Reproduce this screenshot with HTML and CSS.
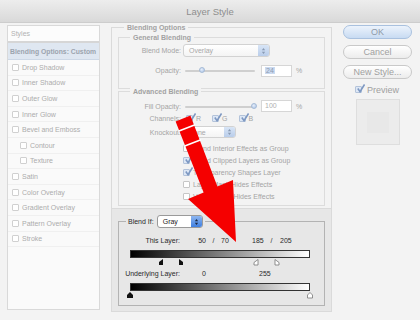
FILE: index.html
```html
<!DOCTYPE html>
<html lang="en">
<head>
    <meta charset="UTF-8">
    <title>Layer Style</title>
    <link rel="stylesheet" href="styles.css">
</head>
<body>
    <div class="titlebar">Layer Style</div>
    <div class="dialog">
        <div class="styles-list">
            <div class="list-head">Styles</div>
            <div class="list-item active">Blending Options: Custom</div>
            <div class="list-item"><span class="box"></span>Drop Shadow</div>
            <div class="list-item"><span class="box"></span>Inner Shadow</div>
            <div class="list-item"><span class="box"></span>Outer Glow</div>
            <div class="list-item"><span class="box"></span>Inner Glow</div>
            <div class="list-item"><span class="box"></span>Bevel and Emboss</div>
            <div class="list-item sub"><span class="box"></span>Contour</div>
            <div class="list-item sub"><span class="box"></span>Texture</div>
            <div class="list-item"><span class="box"></span>Satin</div>
            <div class="list-item"><span class="box"></span>Color Overlay</div>
            <div class="list-item"><span class="box"></span>Gradient Overlay</div>
            <div class="list-item"><span class="box"></span>Pattern Overlay</div>
            <div class="list-item"><span class="box"></span>Stroke</div>
        </div>

        <div class="options">
            <div class="legend">Blending Options</div>
            <div class="options-top">
                <div class="group general">
                    <div class="legend">General Blending</div>
                    <div class="row first">
                        <span class="label">Blend Mode:</span>
                        <div class="select mode">Overlay<span class="stepper"><svg viewBox="0 0 6 9"><path d="M1 3.5 L3 1 L5 3.5 Z M1 5.5 L3 8 L5 5.5 Z"/></svg></span></div>
                    </div>
                    <div class="row second">
                        <span class="label">Opacity:</span>
                        <div class="slider"><span class="thumb" style="left: 14px"></span></div>
                        <div class="num"><span class="hl">24</span></div>
                        <span class="pct">%</span>
                    </div>
                </div>

                <div class="group advanced">
                    <div class="legend">Advanced Blending</div>
                    <div class="row fill">
                        <span class="label">Fill Opacity:</span>
                        <div class="slider"><span class="thumb" style="left: 66px"></span></div>
                        <div class="num">100</div>
                        <span class="pct">%</span>
                    </div>
                    <div class="row">
                        <span class="label">Channels:</span>
                        <span class="cb on chan"><svg viewBox="0 0 10 10"><path d="M2 5 L4.5 8.5 L9.5 0.5"/></svg></span>R
                        <span class="cb on chan"><svg viewBox="0 0 10 10"><path d="M2 5 L4.5 8.5 L9.5 0.5"/></svg></span>G
                        <span class="cb on chan"><svg viewBox="0 0 10 10"><path d="M2 5 L4.5 8.5 L9.5 0.5"/></svg></span>B
                    </div>
                    <div class="row knock">
                        <span class="label">Knockout:</span>
                        <div class="select ko">None<span class="stepper"><svg viewBox="0 0 6 9"><path d="M1 3.5 L3 1 L5 3.5 Z M1 5.5 L3 8 L5 5.5 Z"/></svg></span></div>
                    </div>
                    <div class="checks">
                        <div class="check-row"><span class="cb"></span>Blend Interior Effects as Group</div>
                        <div class="check-row"><span class="cb on"><svg viewBox="0 0 10 10"><path d="M2 5 L4.5 8.5 L9.5 0.5"/></svg></span>Blend Clipped Layers as Group</div>
                        <div class="check-row"><span class="cb on"><svg viewBox="0 0 10 10"><path d="M2 5 L4.5 8.5 L9.5 0.5"/></svg></span>Transparency Shapes Layer</div>
                        <div class="check-row"><span class="cb"></span>Layer Mask Hides Effects</div>
                        <div class="check-row"><span class="cb"></span>Vector Mask Hides Effects</div>
                    </div>
                </div>
            </div>

            <div class="blend-if">
                <div class="bi-field">
                    <div class="bi-legend">
                        Blend If:
                        <div class="select gray">Gray<span class="stepper"><svg viewBox="0 0 6 9"><path d="M1 3.5 L3 1 L5 3.5 Z M1 5.5 L3 8 L5 5.5 Z"/></svg></span></div>
                    </div>
                    <div class="bi-row this">
                        <span class="bi-label">This Layer:</span>
                        <span class="v1">50</span><span class="slash">/</span><span class="v2">70</span>
                        <span class="v3">185</span><span class="slash2">/</span><span class="v4">205</span>
                    </div>
                    <div class="bar"></div>
                    <svg class="thumbs" viewBox="0 0 186 7">
                        <polygon class="blk" points="36,0 36,6 32,6 32,3"/>
                        <polygon class="blk" points="52,0 56,3 56,6 52,6"/>
                        <polygon class="wht" points="131,0.5 131,6 127,6 127,3.5"/>
                        <polygon class="wht" points="148,0.5 152,3.5 152,6 148,6"/>
                    </svg>
                    <div class="bi-row under">
                        <span class="bi-label">Underlying Layer:</span>
                        <span class="v1">0</span>
                        <span class="v5">255</span>
                    </div>
                    <div class="bar"></div>
                    <svg class="thumbs" viewBox="0 0 186 7">
                        <polygon class="blk" points="3,0 6,3 6,6 0,6 0,3"/>
                        <polygon class="wht" points="183,0.5 185.5,3 185.5,6 180.5,6 180.5,3"/>
                    </svg>
                </div>
            </div>
        </div>

        <div class="buttons">
            <div class="btn default">OK</div>
            <div class="btn">Cancel</div>
            <div class="btn">New Style...</div>
            <div class="preview-row">
                <span class="cb on"><svg viewBox="0 0 10 10"><path d="M2 5 L4.5 8.5 L9.5 0.5"/></svg></span>Preview
            </div>
            <div class="preview-box"><div class="preview-swatch"></div></div>
        </div>
    </div>

    <svg class="arrow" viewBox="0 0 420 320">
        <polygon points="190.4,115.6 217.4,186.6 233,180 236,242 188,199 203.6,192.4 175.6,121.4"/>
        <line x1="178.3" y1="131.3" x2="195.1" y2="124.7"/>
        <line x1="184.1" y1="146.3" x2="200.9" y2="139.7"/>
    </svg>
</body>
</html>
```

FILE: styles.css
```css
body {
    margin: 0;
    width: 420px;
    height: 320px;
    overflow: hidden;
    position: relative;
    background: #f3f3f3;
    font-family: "Liberation Sans", Arial, sans-serif;
    font-size: 7px;
    color: #a4a4a4;
}
.titlebar {
    height: 22px;
    line-height: 23px;
    border-bottom: 1px solid #cdcdcd;
    background: linear-gradient(#ededed, #d9d9d9);
    text-align: center;
    font-size: 9.5px;
    color: #8e8e8e;
}
.dialog {
    display: flex;
    padding: 2px 8px 0 7px;
}

/* styles list */
.styles-list {
    width: 93px;
    height: 285px;
    box-sizing: border-box;
    border: 1px solid #d9d9d9;
    background: #fafafa;
}
.list-head {
    height: 15px;
    line-height: 15px;
    padding-left: 3px;
    border-bottom: 2px solid #d6d6d6;
    background: #fcfcfc;
    color: #b2b2b2;
}
.list-item {
    height: 15.6px;
    display: flex;
    align-items: center;
    padding-left: 4px;
    border-bottom: 1px solid #f0f0f0;
    box-sizing: border-box;
    color: #acacac;
}
.list-item.active {
    height: 17px;
    padding-left: 2px;
    background: #dfe7f1;
    border-bottom: 1px solid #cdd8e6;
    font-weight: bold;
    font-size: 6.8px;
    color: #9ca4ae;
}
.list-item.sub {
    padding-left: 12px;
}
.box {
    width: 5px;
    height: 5px;
    border: 1px solid #d0d0d0;
    border-radius: 1px;
    background: #fff;
    margin-right: 3px;
}

/* blending options */
.options {
    width: 221px;
    height: 285px;
    margin: 2px 0 0 11px;
    box-sizing: border-box;
    border: 1px solid #dadada;
    display: flex;
    flex-direction: column;
}
.legend {
    align-self: flex-start;
    margin: -5px 0 0 12px;
    padding: 0 3px;
    line-height: 9px;
    background: #f3f3f3;
    font-weight: bold;
    color: #a2a2a2;
}
.options-top {
    padding: 0 6px 0 6px;
}
.group {
    border: 1px solid #dcdcdc;
    display: flex;
    flex-direction: column;
    box-sizing: border-box;
}
.group .legend {
    margin-left: 11px;
}
.general {
    margin-top: 5px;
    height: 52px;
}
.advanced {
    margin-top: 2px;
    height: 115px;
}
.row {
    display: flex;
    align-items: center;
    height: 12px;
}
.row.first {
    margin-top: 2px;
    height: 13px;
}
.row.second {
    margin-top: 7px;
    height: 13px;
}
.row.fill {
    margin-top: 4px;
}
.row.knock {
    margin-top: 2px;
}
.label {
    width: 62px;
    text-align: right;
    flex-shrink: 0;
}
.select {
    display: flex;
    align-items: center;
    box-sizing: border-box;
    border: 1px solid #d2d2d2;
    border-radius: 3px;
    background: linear-gradient(#fff, #f4f4f4);
    padding-left: 5px;
    color: #a8a8a8;
}
.select.mode {
    width: 87px;
    height: 13px;
    margin-left: 2px;
}
.select.ko {
    width: 53px;
    height: 12px;
    margin-left: 2px;
}
.stepper {
    margin-left: auto;
    width: 11px;
    height: 100%;
    border-radius: 0 2px 2px 0;
    background: linear-gradient(#d8e5f6, #b9cdea);
    display: flex;
    align-items: center;
    justify-content: center;
}
.stepper svg {
    width: 5px;
    height: 8px;
    fill: #8a9bb3;
}
.slider {
    position: relative;
    width: 70px;
    height: 7px;
    margin-left: 4px;
}
.slider::before {
    content: "";
    position: absolute;
    left: 0;
    right: 0;
    top: 3px;
    height: 2px;
    border-radius: 1px;
    background: #cfcfcf;
}
.thumb {
    position: absolute;
    top: 0;
    width: 6px;
    height: 6px;
    border-radius: 50%;
    border: 1px solid #a5bad6;
    box-sizing: border-box;
    background: radial-gradient(circle at 40% 35%, #e6eefa, #a9c2e6);
}
.num {
    width: 31px;
    height: 12px;
    margin-left: 6px;
    box-sizing: border-box;
    border: 1px solid #d6d6d6;
    background: #fff;
    padding-left: 3px;
    line-height: 10px;
    color: #b0b0b0;
}
.hl {
    background: #cbdaf0;
    padding: 0 1px;
    color: #8d9bb0;
}
.pct {
    margin-left: 4px;
}
.cb {
    position: relative;
    width: 7px;
    height: 7px;
    box-sizing: border-box;
    border: 1px solid #c6c6c6;
    border-radius: 1px;
    background: #fff;
    flex-shrink: 0;
}
.cb.on {
    background: #dde7f5;
    border-color: #b3c3da;
}
.cb svg {
    position: absolute;
    left: 0;
    top: -3px;
    width: 9px;
    height: 9px;
    fill: none;
    stroke: #7d98c2;
    stroke-width: 1.8;
}
.cb.chan {
    margin: 0 3px 0 5px;
}
.cb.chan ~ .cb.chan {
    margin-left: 11px;
}
.checks {
    margin-top: 4px;
    display: flex;
    flex-direction: column;
}
.check-row {
    height: 12px;
    display: flex;
    align-items: center;
    padding-left: 64px;
}
.check-row .cb {
    margin-right: 3px;
}

/* blend if */
.blend-if {
    flex: 1;
    margin-top: 2px;
    padding: 12px 6px 5px 6px;
    background: #e7e7e7;
    border-top: 1px solid #dadada;
    color: #2a2a2a;
    display: flex;
    flex-direction: column;
}
.bi-field {
    flex: 1;
    border: 1px solid #b3b3b3;
    display: flex;
    flex-direction: column;
}
.bi-legend {
    align-self: flex-start;
    display: flex;
    align-items: center;
    margin: -7px 0 0 7px;
    padding: 0 2px;
    background: #e7e7e7;
}
.select.gray {
    width: 46px;
    height: 13px;
    margin-left: 3px;
    border-color: #9a9a9a;
    background: #fff;
    color: #222;
}
.select.gray .stepper {
    background: linear-gradient(#8db6f0, #3f7fe0);
}
.select.gray .stepper svg {
    fill: #1b2a44;
}
.bi-row {
    display: flex;
    align-items: center;
    height: 12px;
}
.bi-row.this {
    margin-top: 6px;
}
.bi-row.under {
    margin-top: 1px;
}
.bi-label {
    width: 61px;
    text-align: right;
    flex-shrink: 0;
}
.v1 {
    width: 26px;
    text-align: right;
}
.slash {
    width: 15px;
    text-align: center;
}
.v2 {
    width: 31px;
}
.v3 {
    width: 14px;
}
.slash2 {
    width: 11px;
    text-align: center;
}
.v4 {
    margin-left: 3px;
}
.v5 {
    margin-left: 53px;
}
.bar {
    margin: 4px 0 0 11px;
    width: 180px;
    height: 8px;
    box-sizing: border-box;
    border: 1px solid #333;
    background: linear-gradient(to right, #000, #fff);
}
.thumbs {
    display: block;
    margin: 1px 0 0 8px;
    width: 186px;
    height: 7px;
}
.thumbs .blk {
    fill: #111;
}
.thumbs .wht {
    fill: #fff;
    stroke: #777;
    stroke-width: 0.8;
}

/* buttons */
.buttons {
    width: 69px;
    margin-left: 11px;
    display: flex;
    flex-direction: column;
    gap: 6px;
}
.btn {
    height: 14px;
    box-sizing: border-box;
    border: 1px solid #c9c9c9;
    border-radius: 7px;
    background: linear-gradient(#ffffff, #ececec);
    text-align: center;
    line-height: 12px;
    font-size: 9px;
    color: #a0a0a0;
}
.btn.default {
    border-color: #a9c1df;
    background: linear-gradient(#ecf3fc, #c8dbf2);
    color: #8f9aa8;
}
.preview-row {
    display: flex;
    align-items: center;
    height: 9px;
    padding-left: 12px;
    font-size: 9px;
    color: #a0a0a0;
}
.preview-row .cb {
    margin-right: 5px;
}
.preview-box {
    margin: -1px 0 0 13px;
    width: 44px;
    height: 46px;
    box-sizing: border-box;
    border: 1px solid #dedede;
    background: #ececec;
    display: flex;
    align-items: center;
    justify-content: center;
}
.preview-swatch {
    width: 22px;
    height: 21px;
    background: #e8e8e8;
}

/* red arrow drawn over the dialog */
.arrow {
    position: absolute;
    left: 0;
    top: 0;
    width: 420px;
    height: 320px;
    pointer-events: none;
}
.arrow polygon {
    fill: #f50000;
}
.arrow line {
    stroke: #fff;
    stroke-width: 1.5;
}
```
